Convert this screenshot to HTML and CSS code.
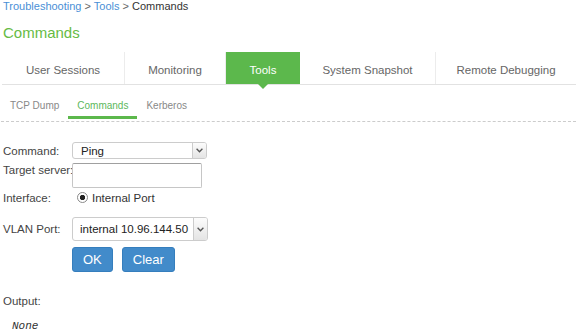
FILE: index.html
```html
<!DOCTYPE html>
<html lang="en">
<head>
    <meta charset="UTF-8">
    <meta name="viewport" content="width=device-width, initial-scale=1.0">
    <title>Commands</title>
    <link rel="stylesheet" href="styles.css">
</head>
<body>

    <div class="breadcrumb">
        <a href="#">Troubleshooting</a> &gt; <a href="#">Tools</a> &gt; <span class="current">Commands</span>
    </div>

    <h2 class="page-title">Commands</h2>

    <ul class="tabs">
        <li>User Sessions</li>
        <li>Monitoring</li>
        <li class="active">Tools</li>
        <li>System Snapshot</li>
        <li>Remote Debugging</li>
    </ul>

    <ul class="subtabs">
        <li>TCP Dump</li>
        <li class="active">Commands</li>
        <li>Kerberos</li>
    </ul>

    <form class="cmd-form" id="cmd-form">
        <div class="row">
            <label for="command">Command:</label>
            <span class="select select-cmd">
                <select id="command" name="command">
                    <option>Ping</option>
                    <option>Traceroute</option>
                    <option>DNS Lookup</option>
                </select>
                <span class="select-btn">
                    <svg width="7" height="5" viewBox="0 0 7 5"><polyline points="0.6,0.8 3.5,3.8 6.4,0.8" fill="none" stroke="#555" stroke-width="1.3"/></svg>
                </span>
            </span>
        </div>

        <div class="row row-top">
            <label for="target">Target server:</label>
            <input type="text" id="target" name="target" class="text-input">
        </div>

        <div class="row row-radio">
            <label>Interface:</label>
            <input type="radio" id="iface" name="iface" class="radio" checked>
            <label for="iface" class="radio-label">Internal Port</label>
        </div>

        <div class="row row-vlan">
            <label for="vlan">VLAN Port:</label>
            <span class="select select-vlan">
                <select id="vlan" name="vlan">
                    <option>internal 10.96.144.50</option>
                </select>
                <span class="select-btn">
                    <svg width="7" height="5" viewBox="0 0 7 5"><polyline points="0.6,0.8 3.5,3.8 6.4,0.8" fill="none" stroke="#555" stroke-width="1.3"/></svg>
                </span>
            </span>
        </div>

        <div class="row row-buttons">
            <button type="submit" class="btn">OK</button>
            <button type="reset" class="btn">Clear</button>
        </div>
    </form>

    <div class="output">
        <div class="output-label">Output:</div>
        <pre class="output-text" id="output">None</pre>
    </div>

</body>
</html>
```

FILE: styles.css
```css
body {
    margin: 0;
    font-family: "Liberation Sans", Arial, sans-serif;
    font-size: 11.5px;
    color: #444;
    background-color: #fff;
}
a {
    color: #4a8fd6;
    text-decoration: none;
}

.breadcrumb {
    padding: 0 3px;
    font-size: 11px;
    line-height: 12px;
    color: #666;
}
.breadcrumb .current {
    color: #333;
}

.page-title {
    margin: 11px 0 0;
    padding: 0 3px;
    font-size: 15px;
    font-weight: normal;
    line-height: 20px;
    color: #66bb44;
}

/* main tabs */
.tabs {
    list-style: none;
    margin: 9px 0 0 2px;
    padding: 0;
    display: grid;
    grid-template-columns: 123px 101px 74px 136px 1fr;
    border-bottom: 1px solid #e2e2e2;
}
.tabs li {
    position: relative;
    height: 32px;
    box-sizing: border-box;
    padding-top: 4px;
    line-height: 28px;
    text-align: center;
    color: #666;
    border-right: 1px solid #ececec;
}
.tabs li:last-child {
    border-right: none;
}
.tabs li.active {
    background-color: #5cb84c;
    color: #fff;
    border-right: none;
}
.tabs li.active::after {
    content: "";
    position: absolute;
    left: 50%;
    top: 100%;
    margin-left: -5px;
    border-left: 5px solid transparent;
    border-right: 5px solid transparent;
    border-top: 5px solid #5cb84c;
}

/* sub tabs */
.subtabs {
    list-style: none;
    margin: 15px 0 0 1px;
    padding: 0 0 2px;
    display: flex;
    border-bottom: 1px dashed #ccc;
}
.subtabs li {
    padding: 0 9px 4px;
    font-size: 10px;
    line-height: 12px;
    color: #888;
    border-bottom: 3px solid transparent;
}
.subtabs li.active {
    color: #5cb85c;
    border-bottom-color: #5cb84c;
}

/* form */
.cmd-form {
    margin-top: 20px;
    padding: 0 3px;
}
.row {
    display: flex;
    align-items: center;
}
.row > label:first-child {
    width: 69px;
    flex: none;
    line-height: 14px;
    white-space: nowrap;
}
.row-top {
    margin-top: 4px;
    align-items: flex-start;
}
.row-radio {
    margin-top: 1px;
    height: 17px;
}
.row-vlan {
    margin-top: 11px;
}
.row-buttons {
    margin-top: 6px;
    padding-left: 69px;
    gap: 9px;
}

.select {
    position: relative;
    display: inline-block;
}
.select-cmd {
    width: 135px;
    height: 17px;
}
.select-vlan {
    width: 136px;
    height: 24px;
}
.select select {
    appearance: none;
    -webkit-appearance: none;
    width: 100%;
    height: 100%;
    box-sizing: border-box;
    margin: 0;
    padding: 0 16px 0 7px;
    border: 1px solid #ccc;
    border-radius: 3px;
    background-color: #fff;
    font-family: inherit;
    font-size: 11.5px;
    color: #222;
}
.select-cmd select {
    padding-left: 8px;
}
.select-btn {
    position: absolute;
    top: 1px;
    right: 1px;
    bottom: 1px;
    width: 13px;
    display: flex;
    align-items: center;
    justify-content: center;
    border-left: 1px solid #ccc;
    border-radius: 0 2px 2px 0;
    background: linear-gradient(#fcfcfc, #e4e4e4);
    pointer-events: none;
}

.text-input {
    width: 130px;
    height: 25px;
    box-sizing: border-box;
    margin: 0;
    padding: 2px 4px;
    border: 1px solid #c6c6c6;
    border-top-color: #a0a0a0;
    border-radius: 2px;
    font-family: inherit;
    font-size: 11.5px;
}

.radio {
    appearance: none;
    -webkit-appearance: none;
    width: 11px;
    height: 11px;
    margin: 0 0 0 5px;
    border: 1px solid #8a8a8a;
    border-radius: 50%;
    background: radial-gradient(circle, #222 0, #222 2.3px, #fff 3px);
}
.radio-label {
    margin-left: 4px;
    color: #333;
}

.btn {
    height: 25px;
    padding: 0 10px;
    border: 1px solid #357ebd;
    border-radius: 3px;
    background-color: #428bca;
    color: #fff;
    font-family: inherit;
    font-size: 13px;
    cursor: pointer;
}
.btn:hover {
    background-color: #3276b1;
}

/* output */
.output {
    margin-top: 22px;
    padding: 0 3px;
}
.output-label {
    line-height: 14px;
}
.output-text {
    margin: 11px 0 0 9px;
    font-family: "Liberation Mono", "Courier New", monospace;
    font-style: italic;
    font-size: 11px;
    line-height: 14px;
    color: #333;
}
```
